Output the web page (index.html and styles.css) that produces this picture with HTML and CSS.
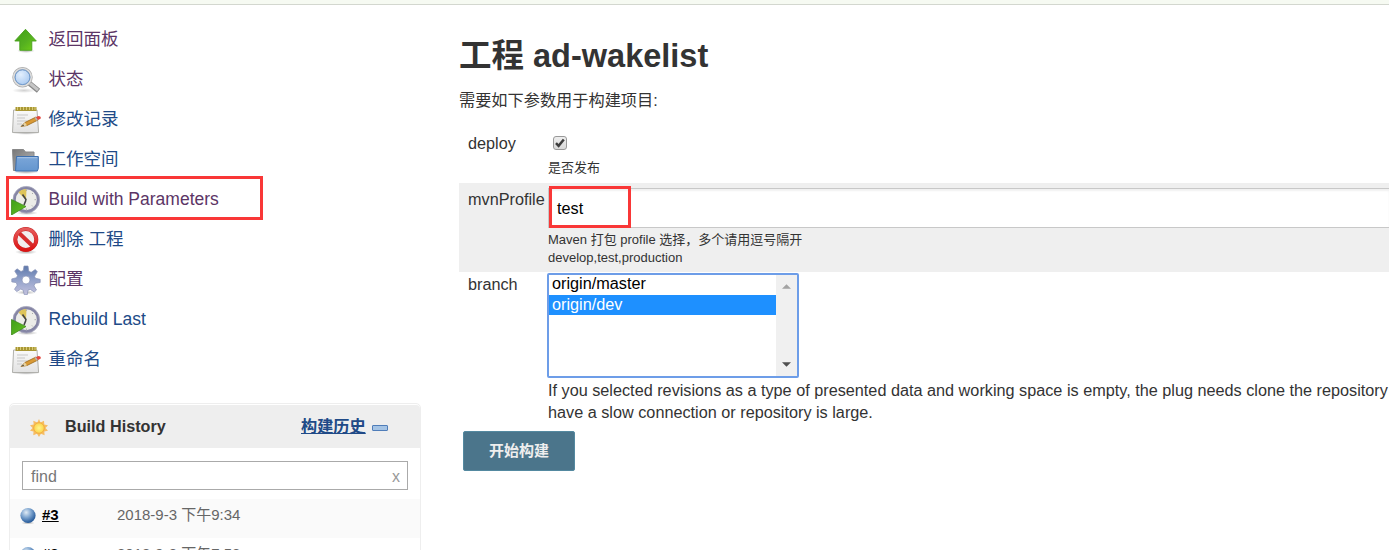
FILE: index.html
```html
<!DOCTYPE html>
<html lang="zh-CN">
<head>
<meta charset="utf-8">
<title>ad-wakelist</title>
<link rel="stylesheet" href="styles.css">
</head>
<body>
<svg class="defs" width="0" height="0" aria-hidden="true">
  <defs>
    <linearGradient id="green" x1="0" y1="0" x2="1" y2="1"><stop offset="0" stop-color="#3f9f18"/><stop offset=".55" stop-color="#55b020"/><stop offset="1" stop-color="#73d216"/></linearGradient>
    <linearGradient id="paper" x1="0" y1="0" x2="0" y2="1"><stop offset="0" stop-color="#fafafa"/><stop offset="1" stop-color="#e2e2e2"/></linearGradient>
    <linearGradient id="blue" x1="0" y1="0" x2="0" y2="1"><stop offset="0" stop-color="#7ba6d8"/><stop offset="1" stop-color="#6496cf"/></linearGradient>
    <linearGradient id="gray" x1="0" y1="0" x2="1" y2="1"><stop offset="0" stop-color="#777"/><stop offset="1" stop-color="#bbb"/></linearGradient>
    <linearGradient id="gearfill" x1="0" y1="0" x2="0" y2="1"><stop offset="0" stop-color="#5d78aa"/><stop offset=".5" stop-color="#94a3cb"/><stop offset="1" stop-color="#c3c1dd"/></linearGradient>
    <linearGradient id="red" x1="0" y1="0" x2="0" y2="1"><stop offset="0" stop-color="#e65a5a"/><stop offset="1" stop-color="#dc1414"/></linearGradient>
    <radialGradient id="lens" cx=".4" cy=".35"><stop offset="0" stop-color="#e3effd"/><stop offset="1" stop-color="#b5d1f3"/></radialGradient>
    <radialGradient id="sunfill"><stop offset="0" stop-color="#fff68c"/><stop offset="1" stop-color="#fbd34c"/></radialGradient>
    <radialGradient id="ballfill" cx=".38" cy=".3" r=".75"><stop offset="0" stop-color="#e0ebf5"/><stop offset=".45" stop-color="#7da4cf"/><stop offset="1" stop-color="#164d91"/></radialGradient>
    <radialGradient id="shade"><stop offset="0" stop-color="#000" stop-opacity=".3"/><stop offset="1" stop-color="#000" stop-opacity="0"/></radialGradient>
    <symbol id="notepad" viewBox="0 0 30 30">
      <ellipse cx="15" cy="28" rx="14" ry="1.8" fill="url(#shade)"/>
      <path d="M2.6 5h23.400l1.600 22.5H1.500z" fill="url(#paper)" stroke="#a9a9a5" stroke-width=".9"/>
      <path d="M4.500 2h21v4h-21z" fill="#a99735"/>
      <path d="M6.500 2v3M9.500 2v3M12.500 2v3M15.500 2v3M18.500 2v3M21.500 2v3M24 2v3" stroke="#d8cb73"/>
      <path d="M6 10h11M6 13h8M6 16h12M6 19h5" stroke="#c7c7c7"/>
      <path d="M10 21.500l4-4 11-5.500 2 3-11 5.500z" fill="#d99a36" stroke="#9b6818" stroke-width=".8"/>
      <path d="M10 21.500l4-4 2 3z" fill="#e8d3a0"/><path d="M10 21.500l2.300-2 .8 1.300z" fill="#444"/>
      <path d="M23.500 12.700l1.500-.7 2 3-1.500.8z" fill="#b5b5b5"/>
      <path d="M25 12l2.500-1c1.800 0 2.800 1.300 2 2.700l-2.500 1.300z" fill="#e4463c"/>
    </symbol>
    <symbol id="clock" viewBox="0 0 30 30">
      <ellipse cx="16" cy="28" rx="11" ry="2" fill="url(#shade)"/>
      <circle cx="15.300" cy="14.700" r="12" fill="#ecece8" stroke="#8585a5" stroke-width="3"/>
      <circle cx="15.300" cy="14.700" r="13.300" fill="none" stroke="#b8b8c8" stroke-width=".6"/>
      <path d="M15 15L7.500 7.500Q10 4 15.500 4z" fill="#dec45a"/>
      <path d="M15.300 15L11.500 9.500M15 15l-2 5" stroke="#444" stroke-width="1.600"/>
      <path d="M15.300 4.500v1.500M25 14.700h-1.500M15.300 25v-1.500M22 8l-1 1M22 21.500l-1-1" stroke="#aaa"/>
      <path d="M.5 14.500L15 21.500.5 30z" fill="url(#green)" stroke="#418c20" stroke-width=".8"/>
    </symbol>
    <symbol id="ball" viewBox="0 0 16 18"><ellipse cx="8" cy="16" rx="7" ry="1.500" fill="url(#shade)"/><circle cx="8" cy="8.500" r="7.600" fill="url(#ballfill)"/></symbol>
  </defs>
</svg>
<header class="topbar"></header>
<div class="page">
  <aside class="side">
    <nav class="tasks">
      <a class="task visited"><svg class="icon" viewBox="0 0 30 30"><ellipse cx="15" cy="25.800" rx="9" ry="2.200" fill="url(#shade)"/><path d="M14.500 4.300L25.300 16h-4.500v9.300H8.800V16h-5z" fill="url(#green)" stroke="#48a01c" stroke-width=".9"/></svg><span>返回面板</span></a>
      <a class="task visited"><svg class="icon" viewBox="0 0 30 30"><ellipse cx="13" cy="25.500" rx="12" ry="2.500" fill="url(#shade)" opacity=".6"/><path d="M18 18l9.500 7.700" stroke="#888" stroke-width="5.200"/><path d="M18.500 18l8.500 7" stroke="#c6c6c6" stroke-width="3"/><circle cx="11.500" cy="12.200" r="8.700" fill="url(#lens)" stroke="#aaa" stroke-width="3"/><circle cx="11.500" cy="12.200" r="8.700" fill="none" stroke="#ddd" stroke-width="1.600"/><circle cx="11.500" cy="12.200" r="7.400" fill="none" stroke="#6d9bd2"/></svg><span>状态</span></a>
      <a class="task"><svg class="icon"><use href="#notepad"/></svg><span>修改记录</span></a>
      <a class="task"><svg class="icon" viewBox="0 0 30 30"><ellipse cx="15" cy="27" rx="13" ry="2" fill="url(#shade)"/><path d="M1.500 4.500h11l2 2.500h8.500v5H5v13.500H2.500z" fill="url(#gray)" stroke="#888"/><path d="M5.500 11.500h21.800v12l-1 2.500H4.500z" fill="url(#blue)" stroke="#3d6fae"/><path d="M6.500 12.700h19.800" stroke="#a9c6e6"/></svg><span>工作空间</span></a>
      <a class="task visited marked"><svg class="icon"><use href="#clock"/></svg><span>Build with Parameters</span></a>
      <a class="task"><svg class="icon" viewBox="0 0 30 30"><ellipse cx="15" cy="27" rx="11" ry="2.500" fill="url(#shade)"/><circle cx="14.800" cy="14.500" r="10.300" fill="#f2eeee"/><path d="M7.500 7.500l14.600 14" stroke="#d72d2d" stroke-width="4"/><circle cx="14.800" cy="14.500" r="10.500" fill="none" stroke="#c42222" stroke-width="4"/><circle cx="14.800" cy="14.500" r="10.500" fill="none" stroke="url(#red)" stroke-width="3.200"/></svg><span>删除 工程</span></a>
      <a class="task visited"><svg class="icon" viewBox="0 0 30 30"><ellipse cx="15" cy="27.500" rx="10" ry="2" fill="url(#shade)"/><path fill="url(#gearfill)" stroke="#8892b6" stroke-width=".7" fill-rule="evenodd" d="M13 1h4l.8 5.300 2.400 1L24.300 4.500l2 2.200-2.700 4.600.8 2 4.800 1v3.200l-5 .7-1.200 2.600 2.500 4.200-2.200 2-4-2.600-2.300.8-.7 4.500h-3l-1.200-4.700-2.400-.9-4 2.500-2.200-2.400 2.700-4-.9-2.600-4.500-.7v-3l4.700-1.200 1-2.300-2.800-4.300 2.300-2.300 4 2.700 2.300-1zM15 11a4 4 0 1 0 0 8 4 4 0 1 0 0-8z"/></svg><span>配置</span></a>
      <a class="task"><svg class="icon"><use href="#clock"/></svg><span>Rebuild Last</span></a>
      <a class="task"><svg class="icon"><use href="#notepad"/></svg><span>重命名</span></a>
    </nav>
    <section class="history">
      <div class="history-head">
        <svg class="sun" viewBox="0 0 18 18"><path d="M9 0l1.500 3.500L14 1.800l.3 3.700L18 6.300 15.500 9l2.500 2.700-3.700.8.3 3.700-3.700-1.500L9 18l-2-3.300-3.700 1.500.2-3.700-3.500-.8L2.500 9 0 6.300l3.700-.8L3.300 1.800l4 1.700z" fill="#f6bd63"/><circle cx="9" cy="9" r="5.300" fill="url(#sunfill)" stroke="#efa73b" stroke-width=".8"/></svg>
        <span class="history-title">Build History</span>
        <a class="trend">构建历史</a><span class="collapse"></span>
      </div>
      <div class="find"><span>find</span><span class="clear">x</span></div>
      <div class="build odd"><svg class="ball"><use href="#ball"/></svg><a>#3</a><span>2018-9-3 下午9:34</span></div>
      <div class="build"><svg class="ball"><use href="#ball"/></svg><a>#2</a><span>2018-9-3 下午7:52</span></div>
    </section>
  </aside>
  <main class="main">
    <h1>工程 ad-wakelist</h1>
    <p class="intro">需要如下参数用于构建项目:</p>
    <div class="param deploy">
      <div class="name">deploy</div>
      <div class="value"><span class="check"><svg viewBox="0 0 12 12"><path d="M2 6.200l2.600 2.600L9.800 2.500" fill="none" stroke="#3d3d3d" stroke-width="2.500"/></svg></span><div class="help">是否发布</div></div>
    </div>
    <div class="param profile">
      <div class="name">mvnProfile</div>
      <div class="value"><div class="input"><div class="highlight">test</div></div><div class="help">Maven 打包 profile 选择，多个请用逗号隔开<br>develop,test,production</div></div>
    </div>
    <div class="param branch">
      <div class="name">branch</div>
      <div class="value">
        <div class="list">
          <div class="options"><div class="option">origin/master</div><div class="option selected">origin/dev</div></div>
          <div class="scroll"><svg viewBox="0 0 10 5"><path d="M0 5L5 0l5 5z" fill="#a3a3a3"/></svg><svg viewBox="0 0 10 5"><path d="M0 0h10L5 5z" fill="#505050"/></svg></div>
        </div>
        <div class="note">If you selected revisions as a type of presented data and working space is empty, the plug needs clone the repository<br>have a slow connection or repository is large.</div>
      </div>
    </div>
    <div class="submit">开始构建</div>
  </main>
</div>
</body>
</html>
```
FILE: styles.css
```css
* { box-sizing: border-box; }
body { margin: 0; height: 550px; overflow: hidden; background: #fff; color: #333; font: 16px/22px "Liberation Sans", "Noto Sans CJK SC", sans-serif; }
.defs { display: block; }
.topbar { height: 5px; background: #f6faf2; border-bottom: 1px solid #d3d7cf; }
.page { display: flex; height: 545px; overflow: hidden; white-space: nowrap; }
.side { flex: 0 0 421px; padding: 14px 0 0 6px; }
.tasks { display: flex; flex-direction: column; height: 384px; }
.task { display: flex; align-items: center; gap: 7.6px; flex: 0 0 40px; padding: 2px 0 0 5px; font-size: 17.5px; color: #204a87; }
.task span { position: relative; top: -1px; }
.icon { width: 30px; height: 30px; flex: none; }
.visited { color: #5c3566; }
.marked { width: 257px; flex-basis: 44px; margin: -3px 0 -1px; padding: 3px 0 0 2px; border: 3px solid #f93737; }
.history { width: 412px; height: 200px; margin-left: 3px; border: 1px solid #eee; border-radius: 5px; padding-top: 1px; }
.history-head { display: flex; align-items: center; height: 43px; padding: 0 0 1px 20px; background: #eee; border-radius: 4px 4px 0 0; font-size: 16.2px; font-weight: bold; }
.sun { width: 18px; height: 18px; margin-top: 3px; }
.history-title { width: 236px; margin-left: 17px; }
.trend { color: #204a87; text-decoration: underline; }
.collapse { width: 16px; height: 6px; margin: 4px 0 0 6px; border: 1px solid #4f7db9; border-radius: 1px; background: #a5c4e5; }
.find { display: flex; justify-content: space-between; align-items: center; height: 29px; margin: 13px 12px 9px; padding: 2px 7px 0 8px; border: 1px solid #aaa; color: #777; }
.clear { color: #999; }
.build { display: flex; height: 39px; padding: 5px 0 0 10px; font-size: 15px; color: #666; }
.build a { width: 75px; margin-left: 6px; color: #000; font-weight: bold; text-decoration: underline; }
.odd { background: #fafafa; }
.ball { width: 16px; height: 18px; margin-top: 3px; }
.main { flex: 1; min-width: 0; padding: 31px 0 0 38px; font-size: 16.24px; }
h1 { margin: 0 0 12px; font-size: 32.5px; line-height: 40px; }
.intro { margin: 0; height: 41px; font-size: 16.2px; line-height: 24px; }
.param { display: flex; padding-left: 9px; }
.name { flex: 0 0 80px; }
.value { flex: 1; min-width: 0; }
.deploy { height: 54px; padding-top: 3px; }
.check { display: flex; width: 14px; height: 14px; margin: 4px 0 0 5px; border: 1px solid #999; border-radius: 3px; background: linear-gradient(#eee, #d9d9d9); }
.check svg { width: 12px; height: 12px; }
.help { font-size: 13px; line-height: 18px; }
.deploy .help { margin-top: 9px; }
.profile { height: 89px; padding-top: 3px; background: #efefef; }
.profile .name { padding-top: 2px; }
.input { height: 40px; margin: 2px 0 3px; border: 1px solid #c8c8c8; border-right: 0; background: #fff; box-shadow: inset 0 2px 2px #f1f1f1; }
.highlight { width: 82px; height: 42px; margin-top: -3px; padding: 9px 0 0 5px; border: 3px solid #f93737; color: #000; line-height: 20px; }
.branch { height: 159px; }
.branch .name { padding-top: 1px; }
.list { display: flex; width: 252px; height: 105px; margin: 1px 0 1px -1px; border: 2px solid #6d9de8; border-radius: 2px; color: #000; }
.options { flex: 1; }
.option { height: 20px; padding: 0 3px; line-height: 16px; }
.selected { height: 20px; color: #fff; background: #1e90ff; line-height: 18px; }
.scroll { display: flex; width: 21px; flex-direction: column; justify-content: space-between; align-items: center; padding: 9px 0; background: #f0f0f0; }
.scroll svg { width: 9px; height: 5px; }
.submit { width: 112px; height: 40px; border: 1px solid #5489a0; border-radius: 2px; margin-left: 4px; background: #4b758b; color: #eee; font-size: 15px; font-weight: bold; line-height: 38px; text-align: center; }
```
